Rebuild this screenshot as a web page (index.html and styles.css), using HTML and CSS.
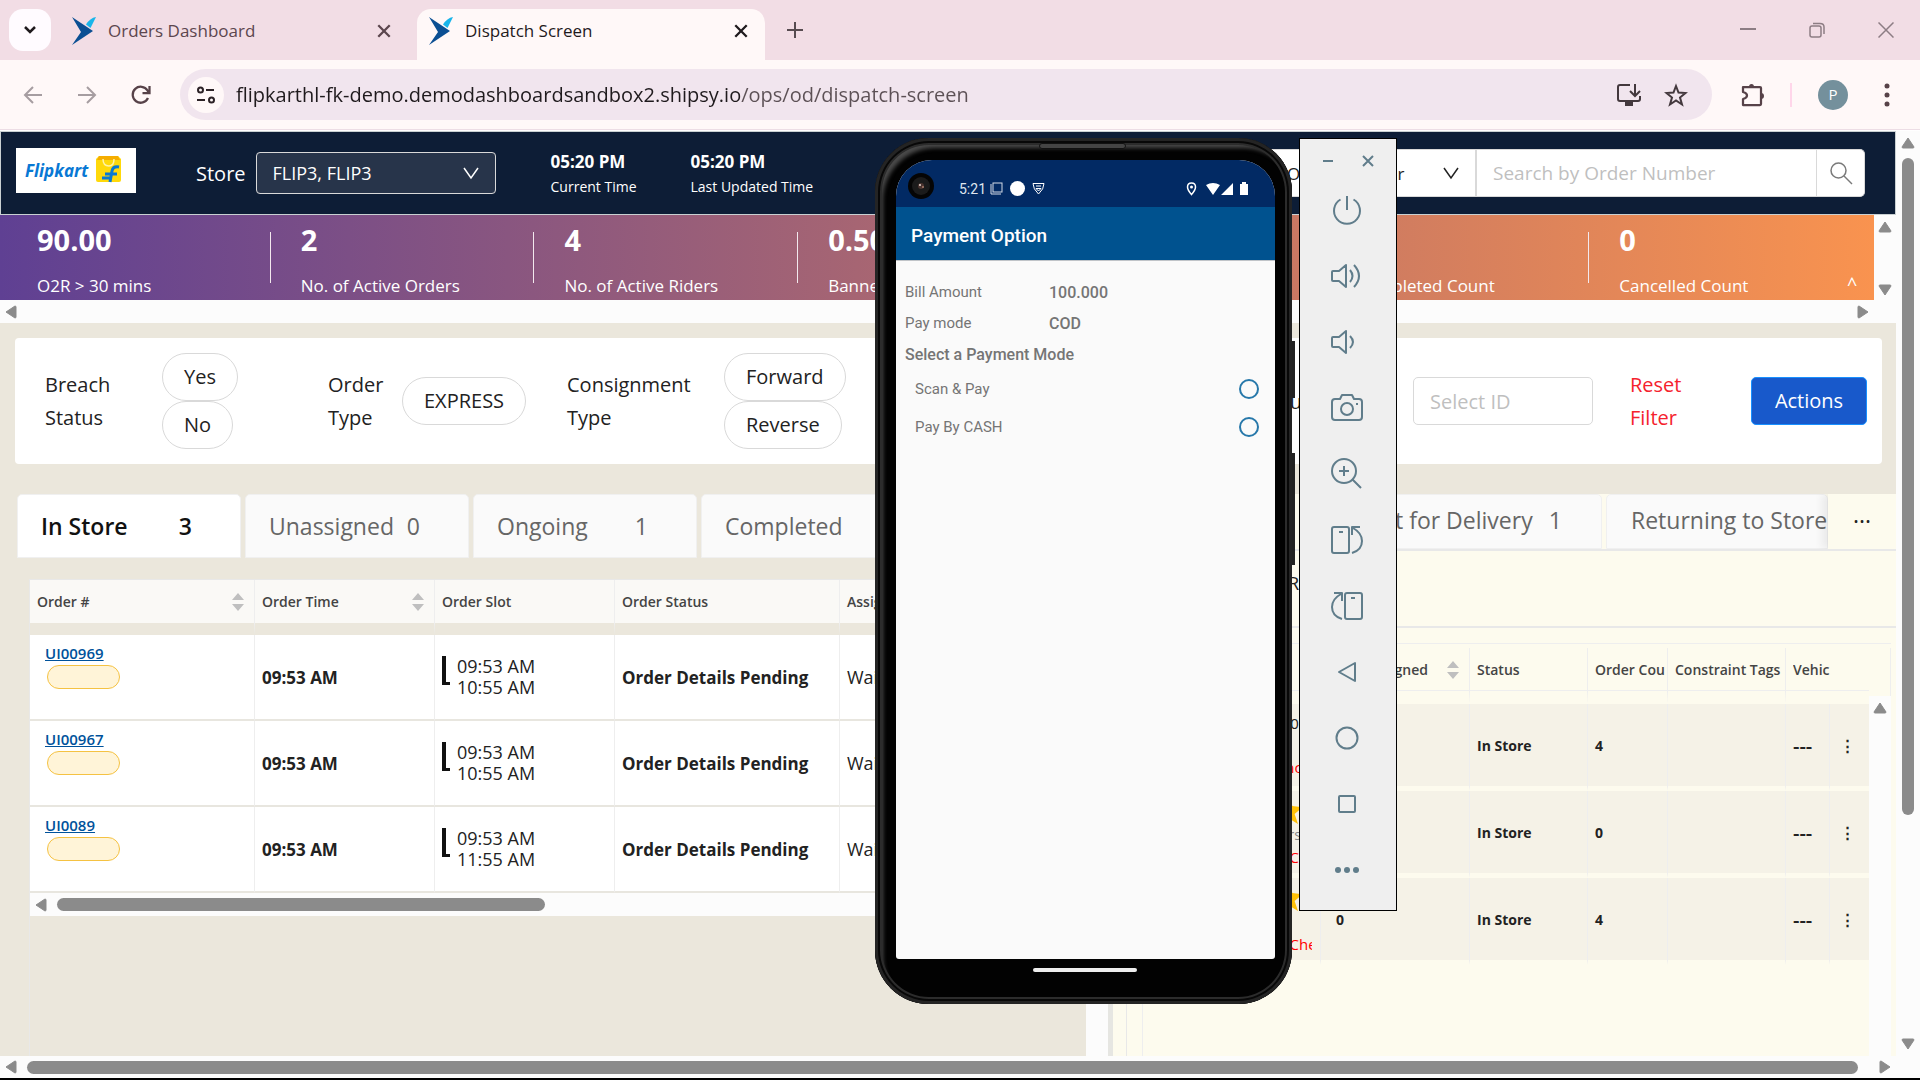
FILE: index.html
```html
<!DOCTYPE html>
<html lang="en">
    <head>
        <meta charset="UTF-8">
        <title>Dispatch Screen</title>
        <link rel="stylesheet" href="styles.css">
    </head>
    <body>
        <svg class="sprite" aria-hidden="true">
            <symbol id="logo" viewBox="0 0 24 28">
                <path d="M0 0 L21 14 L0 28 L9 15 Z" fill="#0b4f93"/>
                <path d="M14 7.500 Q18 1 24 0 L18.500 11 Z" fill="#19b5ea"/>
            </symbol>
            <symbol id="close" viewBox="0 0 14 14">
                <path d="M2 2 L12 12 M12 2 L2 12" fill="none" stroke="currentColor" stroke-width="2"/>
            </symbol>
            <symbol id="chevron" viewBox="0 0 16 16">
                <path d="M1 3 L8 13 L15 3" fill="none" stroke="currentColor" stroke-width="1.500"/>
            </symbol>
            <symbol id="triangle" viewBox="0 0 14 12">
                <path d="M7 1 L13 10 Q13 11 12 11 H2 Q1 11 1 10 Z" fill="#8b8b8b" stroke="#8b8b8b" stroke-linejoin="round"/>
            </symbol>
            <symbol id="sort" viewBox="0 0 12 18">
                <path d="M6 0 L12 7 H0 Z M6 18 L12 11 H0 Z" fill="#bfbfbf"/>
            </symbol>
            <symbol id="star" viewBox="0 0 24 24">
                <path d="M12 0 L15 8 L24 9 L17 15 L20 24 L12 19 L4 24 L7 15 L0 9 L9 8 Z" fill="#ffc107"/>
            </symbol>
        </svg>

        <div class="tab-strip">
            <button class="tab-search" aria-label="Search tabs">
                <svg width="14" height="14" viewBox="0 0 14 14"><path d="M2 4 L7 9 L12 4" fill="none" stroke="#1f1a1d" stroke-width="2.500"/></svg>
            </button>
            <div class="browser-tab">
                <svg class="favicon"><use href="#logo"/></svg>
                <span>Orders Dashboard</span>
                <button aria-label="Close tab"><svg width="16" height="16"><use href="#close"/></svg></button>
            </div>
            <div class="browser-tab is-active">
                <svg class="favicon"><use href="#logo"/></svg>
                <span>Dispatch Screen</span>
                <button aria-label="Close tab"><svg width="16" height="16"><use href="#close"/></svg></button>
            </div>
            <button class="new-tab" aria-label="New tab">
                <svg width="16" height="16" viewBox="0 0 16 16"><path d="M8 0 V16 M0 8 H16" stroke="#574b50" stroke-width="2"/></svg>
            </button>
            <div class="window-buttons">
                <button aria-label="Minimize"><svg width="16" height="16" viewBox="0 0 16 16"><path d="M0 7 H16" stroke="#8d7d84" stroke-width="2"/></svg></button>
                <button aria-label="Restore"><svg width="16" height="16" viewBox="0 0 16 16" fill="none" stroke="#8d7d84" stroke-width="1.500"><rect x="1" y="4" width="11" height="11" rx="2"/><path d="M4 1.500 H11 Q15 1.500 15 5 V12"/></svg></button>
                <button aria-label="Close"><svg width="16" height="16" viewBox="0 0 16 16"><path d="M0.500 0.500 L15.500 15.500 M15.500 0.500 L0.500 15.500" stroke="#8d7d84" stroke-width="1.500"/></svg></button>
            </div>
        </div>

        <div class="browser-toolbar">
            <div class="nav-buttons">
                <button aria-label="Back"><svg width="20" height="20" viewBox="0 0 20 20" fill="none" stroke="#a69da1" stroke-width="2"><path d="M19 10 H2 M10 2 L2 10 L10 18"/></svg></button>
                <button aria-label="Forward"><svg width="20" height="20" viewBox="0 0 20 20" fill="none" stroke="#a69da1" stroke-width="2"><path d="M1 10 H18 M10 2 L18 10 L10 18"/></svg></button>
                <button aria-label="Reload"><svg width="20" height="20" viewBox="0 0 20 20" fill="none" stroke="#574249" stroke-width="2.250"><path d="M17 13 A8 8 0 1 1 16.500 5.500 L18 7.500 M18.500 1 V8 H11.500"/></svg></button>
            </div>
            <div class="address-bar">
                <button class="site-info" aria-label="Site information">
                    <svg width="20" height="20" viewBox="0 0 20 20" fill="none" stroke="#2c2226" stroke-width="2"><circle cx="4.500" cy="5" r="2.500"/><path d="M10 5 H18 M1 15 H9"/><circle cx="15.500" cy="15" r="2.500"/></svg>
                </button>
                <input type="text" aria-label="Address" value="flipkarthl-fk-demo.demodashboardsandbox2.shipsy.io/ops/od/dispatch-screen">
                <button aria-label="Install app"><svg width="26" height="24" viewBox="0 0 26 24" fill="none" stroke="#43383d" stroke-width="2"><path d="M14 2 H4 Q2 2 2 4 V16 Q2 18 4 18 H22 Q24 18 24 16 V13"/><path d="M19 1 V12 M14 8 L19 13 L24 8"/><path d="M9 21 H17" stroke-width="4"/></svg></button>
                <button aria-label="Bookmark"><svg width="24" height="24" viewBox="0 0 24 24" fill="none" stroke="#43383d" stroke-width="2"><path d="M12 3 L14.500 9.500 L21.500 10 L16 14.500 L18 21.500 L12 17.500 L6 21.500 L8 14.500 L2.500 10 L9.500 9.500 Z"/></svg></button>
            </div>
            <button class="extensions" aria-label="Extensions">
                <svg width="26" height="26" viewBox="0 0 26 26" fill="none" stroke="#574249" stroke-width="2.250" stroke-linejoin="round"><path d="M3 5 H20 Q21 5 21 6 V22 Q21 23 20 23 H3 V17 Q7 16 7 13.500 Q7 11 3 10 Z"/><path d="M9 5 Q9 2 11.500 2 Q14 2 14 5 Z M21 11 Q24 11 24 14 Q24 17 21 17 Z" fill="#574249" stroke="none"/></svg>
            </button>
            <span class="toolbar-divider"></span>
            <button class="profile">P</button>
            <button class="browser-menu" aria-label="Menu">
                <svg width="6" height="26" viewBox="0 0 6 26" fill="#574249"><circle cx="3" cy="4" r="2.500"/><circle cx="3" cy="13" r="2.500"/><circle cx="3" cy="22" r="2.500"/></svg>
            </button>
        </div>

        <div class="viewport">
            <div class="page">
                <header class="page-header">
                    <svg class="brand" width="120" height="45" viewBox="0 0 120 45" role="img" aria-label="Flipkart">
                        <rect width="120" height="45" fill="#fff"/>
                        <text x="9" y="29" class="brand-text">Flipkart</text>
                        <path d="M80 11 L83 8 H102 L105 11 V32 Q105 34 103 34 H82 Q80 34 80 32 Z" fill="#ffd90a"/>
                        <path d="M83 8 H102 L104 12 H81 Z" fill="#f5ad00"/>
                        <path d="M87 11 Q87 18 93 18 Q98 18 98 11" fill="none" stroke="#fff3a8" stroke-width="1.500"/>
                        <path d="M103 19 Q97 18 96 23 L94 34 M89 26 H101 M86 30 H96" fill="none" stroke="#0878d4" stroke-width="3"/>
                    </svg>
                    <label class="store-label" for="store">Store</label>
                    <div class="select-box store-select">
                        <select id="store"><option>FLIP3, FLIP3</option></select>
                        <svg width="16" height="16"><use href="#chevron"/></svg>
                    </div>
                    <div class="clock"><strong>05:20 PM</strong><span>Current Time</span></div>
                    <div class="clock"><strong>05:20 PM</strong><span>Last Updated Time</span></div>
                    <form class="order-search">
                        <div class="select-box type-select">
                            <select aria-label="Search type"><option>Order Number</option></select>
                            <svg width="16" height="16"><use href="#chevron"/></svg>
                        </div>
                        <input type="text" aria-label="Order number" placeholder="Search by Order Number">
                        <button type="button" aria-label="Search"><svg width="24" height="24" viewBox="0 0 24 24" fill="none" stroke="#7a7a7a" stroke-width="1.500"><circle cx="9.500" cy="9.500" r="7.500"/><path d="M15 15 L23 23"/></svg></button>
                    </form>
                </header>

                <div class="metrics-row">
                    <div class="metrics">
                        <div class="metric"><strong>90.00</strong><span>O2R &gt; 30 mins</span></div>
                        <div class="metric"><strong>2</strong><span>No. of Active Orders</span></div>
                        <div class="metric"><strong>4</strong><span>No. of Active Riders</span></div>
                        <div class="metric"><strong>0.50</strong><span>Banner Ratio</span></div>
                        <div class="metric"><strong>0</strong><span>Ongoing Count</span></div>
                        <div class="metric"><strong>0</strong><span>Completed Count</span></div>
                        <div class="metric"><strong>0</strong><span>Cancelled Count</span></div>
                        <button class="collapse">^</button>
                    </div>
                    <div class="scroll-y">
                        <svg class="arrow"><use href="#triangle"/></svg>
                        <svg class="arrow is-down"><use href="#triangle"/></svg>
                    </div>
                </div>
                <div class="scroll-x metrics-scroll">
                    <svg class="arrow is-left"><use href="#triangle"/></svg>
                    <svg class="arrow is-right"><use href="#triangle"/></svg>
                </div>

                <div class="filters">
                    <span>Breach<br>Status</span>
                    <div class="pills"><button>Yes</button><button>No</button></div>
                    <span>Order<br>Type</span>
                    <div class="pills"><button>EXPRESS</button></div>
                    <span>Consignment<br>Type</span>
                    <div class="pills"><button>Forward</button><button>Reverse</button></div>
                    <label for="hub">Hub</label>
                    <input type="text" id="hub" placeholder="Select ID">
                    <a href="#">Reset<br>Filter</a>
                    <button class="actions">Actions</button>
                </div>

                <div class="boards">
                    <section class="orders">
                        <div class="orders-main">
                            <div class="tabs">
                                <button class="is-active"><span>In Store</span><b>3</b></button>
                                <button><span>Unassigned</span><b>0</b></button>
                                <button><span>Ongoing</span><b>1</b></button>
                                <button class="is-wide"><span>Completed</span><b>0</b></button>
                            </div>
                            <div class="orders-table-box">
                                <table class="orders-table">
                                    <colgroup><col class="w225"><col class="w180"><col class="w180"><col class="w225"><col></colgroup>
                                    <thead>
                                        <tr>
                                            <th>Order # <svg class="sort"><use href="#sort"/></svg></th>
                                            <th>Order Time <svg class="sort"><use href="#sort"/></svg></th>
                                            <th>Order Slot</th>
                                            <th>Order Status</th>
                                            <th>Assigned Rider</th>
                                        </tr>
                                    </thead>
                                    <tbody>
                                        <tr>
                                            <td class="order-id"><a href="#">UI00969</a><span></span></td>
                                            <td><b>09:53 AM</b></td>
                                            <td><div class="slot"><i></i><span>09:53 AM<br>10:55 AM</span></div></td>
                                            <td><b>Order Details Pending</b></td>
                                            <td>Waiting</td>
                                        </tr>
                                        <tr>
                                            <td class="order-id"><a href="#">UI00967</a><span></span></td>
                                            <td><b>09:53 AM</b></td>
                                            <td><div class="slot"><i></i><span>09:53 AM<br>10:55 AM</span></div></td>
                                            <td><b>Order Details Pending</b></td>
                                            <td>Waiting</td>
                                        </tr>
                                        <tr>
                                            <td class="order-id"><a href="#">UI0089</a><span></span></td>
                                            <td><b>09:53 AM</b></td>
                                            <td><div class="slot"><i></i><span>09:53 AM<br>11:55 AM</span></div></td>
                                            <td><b>Order Details Pending</b></td>
                                            <td>Waiting</td>
                                        </tr>
                                    </tbody>
                                </table>
                                <div class="scroll-x">
                                    <svg class="arrow is-left"><use href="#triangle"/></svg>
                                    <div class="thumb orders-thumb"></div>
                                    <svg class="arrow is-right"><use href="#triangle"/></svg>
                                </div>
                            </div>
                        </div>
                        <div class="scroll-y"></div>
                    </section>

                    <section class="riders">
                        <div class="tabs rider-tabs">
                            <button><span>Out for Delivery</span><b>1</b></button>
                            <button><span>Returning to Store</span></button>
                            <button class="more">···</button>
                        </div>
                        <div class="rider-bar">Riders</div>
                        <div class="riders-table-box">
                            <div class="riders-table-wrap">
                                <table class="riders-table">
                                    <colgroup><col><col class="w149"><col class="w118"><col class="w80"><col class="w118"><col class="w44"><col class="w39"></colgroup>
                                    <thead>
                                        <tr>
                                            <th>Rider</th>
                                            <th>Last Assigned <svg class="sort"><use href="#sort"/></svg></th>
                                            <th>Status</th>
                                            <th><span class="clip is-count">Order Count</span></th>
                                            <th>Constraint Tags</th>
                                            <th colspan="2"><span class="clip">Vehicle</span></th>
                                        </tr>
                                    </thead>
                                    <tbody>
                                        <tr>
                                            <td><div class="rider"><span class="rider-name">R 100</span><small>(10)</small><em>Launched</em></div></td>
                                            <td>0</td><td>In Store</td><td>4</td><td></td><td class="vehicle">---</td>
                                            <td><button aria-label="Row menu">⋮</button></td>
                                        </tr>
                                        <tr>
                                            <td><div class="rider"><svg><use href="#star"/></svg><small>Riders</small><em>Not Checked In</em></div></td>
                                            <td>0</td><td>In Store</td><td>0</td><td></td><td class="vehicle">---</td>
                                            <td><button aria-label="Row menu">⋮</button></td>
                                        </tr>
                                        <tr>
                                            <td><div class="rider"><svg><use href="#star"/></svg><small>&nbsp;</small><em>Not Checked In</em></div></td>
                                            <td>0</td><td>In Store</td><td>4</td><td></td><td class="vehicle">---</td>
                                            <td><button aria-label="Row menu">⋮</button></td>
                                        </tr>
                                    </tbody>
                                </table>
                            </div>
                            <div class="riders-scroll">
                                <div class="scroll-y"><svg class="arrow"><use href="#triangle"/></svg></div>
                            </div>
                        </div>
                    </section>
                </div>
            </div>
            <div class="scroll-y page-scroll">
                <svg class="arrow"><use href="#triangle"/></svg>
                <div class="thumb"></div>
                <svg class="arrow is-down"><use href="#triangle"/></svg>
            </div>
        </div>
        <div class="scroll-x window-scroll">
            <svg class="arrow is-left"><use href="#triangle"/></svg>
            <div class="thumb"></div>
            <svg class="arrow is-right"><use href="#triangle"/></svg>
        </div>

        <!-- emulator windows floating over the dashboard -->
        <div class="phone">
            <i class="speaker"></i>
            <i class="side-button"></i>
            <i class="side-button is-long"></i>
            <div class="phone-screen">
                <div class="status-bar">
                    <svg class="camera" width="26" height="26" viewBox="0 0 26 26"><circle cx="13" cy="13" r="13" fill="#050505"/><circle cx="13" cy="13" r="9" fill="#1b1b1b"/><circle cx="13" cy="13" r="3" fill="#4a3430"/><circle cx="12" cy="12" r="1" fill="#e8d8d0"/><circle cx="15" cy="14" r="1" fill="#a77a68"/></svg>
                    <span>5:21</span>
                    <svg width="13" height="13" viewBox="0 0 13 13" fill="none" stroke="#d5dbe6"><rect x="3" y="1" width="9" height="9"/><path d="M1 2 V12 H11"/></svg>
                    <svg width="15" height="15" viewBox="0 0 15 15"><circle cx="7.500" cy="7.500" r="7.500" fill="#fff"/></svg>
                    <svg width="13" height="13" viewBox="0 0 13 13" fill="none" stroke="#fff"><path d="M1 1.500 H12 Q12 7 6.500 12 Q1 7 1 1.500 Z M4 4 H9 M4 6.500 H9 L6.500 9 Z"/></svg>
                    <svg class="status-right" width="64" height="14" viewBox="0 0 64 14" fill="#fff"><path d="M5.500 1 Q9.500 1 9.500 5 Q9.500 8 5.500 12.500 Q1.500 8 1.500 5 Q1.500 1 5.500 1 Z" fill="none" stroke="#fff" stroke-width="1.500"/><circle cx="5.500" cy="5" r="1.500"/><path d="M20 3 Q27 -1 34 3 L27 13 Z M47 1 V13 H35 Z"/><path d="M54 2 H56 V0 H60 V2 H62 V13 H54 Z"/></svg>
                </div>
                <div class="app-bar">Payment Option</div>
                <form class="payment">
                    <dl>
                        <dt>Bill Amount</dt><dd>100.000</dd>
                        <dt>Pay mode</dt><dd>COD</dd>
                    </dl>
                    <h4>Select a Payment Mode</h4>
                    <label>Scan &amp; Pay <input type="radio" name="pay-mode"></label>
                    <label>Pay By CASH <input type="radio" name="pay-mode"></label>
                </form>
            </div>
            <i class="home-bar"></i>
        </div>

        <div class="emulator-bar">
            <div class="emulator-title">
                <button aria-label="Minimize emulator"><svg width="12" height="12" viewBox="0 0 12 12"><path d="M1 6 H11"/></svg></button>
                <button aria-label="Close emulator"><svg width="12" height="12" viewBox="0 0 12 12"><path d="M1 1 L11 11 M11 1 L1 11"/></svg></button>
            </div>
            <button aria-label="Power"><svg viewBox="0 0 32 32"><path d="M9.500 5.500 A13 13 0 1 0 22.500 5.500 M16 2 V16"/></svg></button>
            <button aria-label="Volume up"><svg viewBox="0 0 32 32"><path d="M1 12 Q1 11 2 11 H8 L15 5 V27 L8 21 H2 Q1 21 1 20 Z M19 10 Q24 16 19 22 M23 5 Q33 16 23 27"/></svg></button>
            <button aria-label="Volume down"><svg viewBox="0 0 32 32"><path d="M1 12 Q1 11 2 11 H8 L15 5 V27 L8 21 H2 Q1 21 1 20 Z M19 10 Q25 16 19 22"/></svg></button>
            <button aria-label="Screenshot"><svg viewBox="0 0 32 32"><path d="M4 7 H9 L11 3 H21 L23 7 H28 Q31 7 31 10 V25 Q31 28 28 28 H4 Q1 28 1 25 V10 Q1 7 4 7 Z"/><circle cx="16" cy="17" r="6"/><path d="M26 11 V13"/></svg></button>
            <button aria-label="Zoom"><svg viewBox="0 0 32 32"><circle cx="13" cy="13" r="12"/><path d="M21.500 21.500 L30 30 M13 8 V18 M8 13 H18"/></svg></button>
            <button aria-label="Rotate left"><svg viewBox="0 0 32 32"><rect x="1" y="3" width="17" height="26" rx="2"/><path d="M8 8 H12 M29 3 H21 V11 M22 4 Q31 9 31 17 Q31 26 21 29"/></svg></button>
            <button aria-label="Rotate right"><svg viewBox="0 0 32 32"><rect x="14" y="3" width="17" height="26" rx="2"/><path d="M20 8 H24 M3 3 H11 V11 M10 4 Q1 9 1 17 Q1 26 11 29"/></svg></button>
            <button aria-label="Back"><svg viewBox="0 0 32 32"><path d="M8 16 L24 7 V25 Z"/></svg></button>
            <button aria-label="Home"><svg viewBox="0 0 32 32"><circle cx="16" cy="16" r="10.500"/></svg></button>
            <button aria-label="Overview"><svg viewBox="0 0 32 32"><rect x="8" y="8" width="16" height="16" rx="1"/></svg></button>
            <button aria-label="More"><svg viewBox="0 0 32 32"><g class="dots"><circle cx="7" cy="16" r="3"/><circle cx="16" cy="16" r="3"/><circle cx="25" cy="16" r="3"/></g></svg></button>
        </div>
    </body>
</html>
```
FILE: styles.css
```css
* {
    box-sizing: border-box;
    padding: 0;
    margin: 0;
}

html, body {
    height: 100%;
}

body {
    display: flex;
    flex-direction: column;
    position: relative;
    overflow: hidden;
    border-bottom: 2px solid #000;
    font-family: "Open Sans", "Noto Sans", sans-serif;
    font-size: 18px;
    color: #222;
}

button {
    border: none;
    background: none;
    color: inherit;
    font: inherit;
    line-height: 1;
}

input, select {
    font: inherit;
    outline: none;
}

svg {
    display: block;
    flex: none;
}

.sprite {
    position: absolute;
    width: 0;
    height: 0;
}

/* browser window */

.tab-strip {
    display: flex;
    align-items: flex-start;
    flex: none;
    height: 60px;
    padding: 9px 8px 0 9px;
    background-color: #f2dde5;
}

.tab-search {
    display: grid;
    place-items: center;
    width: 42px;
    height: 42px;
    border-radius: 14px;
    background-color: #fffbff;
}

.browser-tab {
    display: flex;
    align-items: center;
    gap: 12px;
    width: 348px;
    height: 51px;
    margin-left: 9px;
    padding: 0 16px 8px 12px;
    font-size: 17px;
    color: #5c464e;
}

.browser-tab .favicon {
    width: 24px;
    height: 28px;
}

.browser-tab button {
    margin-left: auto;
}

.browser-tab.is-active {
    border-radius: 14px 14px 0 0;
    background-color: #fff8f8;
    color: #1f1a1d;
}

.new-tab {
    margin: 13px 0 0 22px;
}

.window-buttons {
    display: flex;
    gap: 53px;
    margin: 13px 18px 0 auto;
}

.browser-toolbar {
    display: flex;
    align-items: center;
    flex: none;
    height: 70px;
    padding: 0 30px 0 23px;
    background-color: #fff8f8;
    border-bottom: 1px solid #eddde5;
}

.nav-buttons {
    display: flex;
    gap: 34px;
    margin-right: 29px;
}

.address-bar {
    display: flex;
    align-items: center;
    flex: 1;
    gap: 22px;
    height: 51px;
    padding: 0 24px 0 8px;
    border-radius: 26px;
    background-color: #f1e5ee;
}

.address-bar .site-info {
    display: grid;
    place-items: center;
    width: 36px;
    height: 36px;
    border-radius: 18px;
    background-color: #fff8f8;
}

.address-bar input {
    flex: 1;
    margin-left: -10px;
    border: none;
    font-size: 20px;
    background: linear-gradient(to right, #1f1a1d 504px, #5c5055 504px);
    background-clip: text;
    -webkit-text-fill-color: transparent;
}

.extensions {
    margin-left: 28px;
}

.toolbar-divider {
    width: 2px;
    height: 24px;
    margin: 0 26px 0 24px;
    background-color: #ffd6ea;
}

.profile {
    width: 30px;
    height: 30px;
    border-radius: 15px;
    background-color: #74909c;
    color: #fff;
    font-size: 15px;
}

.browser-menu {
    margin-left: 36px;
}

/* scrollbars */

.scroll-x,
.scroll-y {
    display: flex;
    align-items: center;
    justify-content: space-between;
    flex: none;
    background-color: #fcfcfc;
}

.scroll-x {
    height: 23px;
    padding: 0 4px;
}

.scroll-y {
    flex-direction: column;
    width: 22px;
    padding: 6px 0;
}

.arrow {
    width: 14px;
    height: 12px;
}

.arrow.is-down {
    transform: rotate(180deg);
}

.arrow.is-left {
    transform: rotate(-90deg);
}

.arrow.is-right {
    transform: rotate(90deg);
}

.thumb {
    border-radius: 7px;
    background-color: #8b8b8b;
}

.scroll-x .thumb {
    height: 13px;
    margin: 0 auto 0 9px;
}

.scroll-x .orders-thumb {
    width: 488px;
}

.window-scroll {
    padding: 0 28px 0 4px;
    height: 22px;
}

.window-scroll .thumb {
    flex: 1;
    margin: 0 20px 0 9px;
}

.page-scroll {
    width: 24px;
}

.page-scroll .thumb {
    width: 12px;
    height: 72%;
    margin: 9px 0 auto;
}

/* dashboard */

.viewport {
    display: flex;
    flex: 1;
    min-height: 0;
    margin-top: 1px;
}

.page {
    display: flex;
    flex-direction: column;
    flex: 1;
    min-width: 0;
    background-color: #ebe7dc;
}

.page-header {
    display: flex;
    align-items: center;
    flex: none;
    height: 84px;
    padding: 0 30px 0 15px;
    border: 1px solid #c9d0d2;
    background-color: #0d1d36;
    color: #fff;
}

.brand {
    margin-bottom: 6px;
}

.brand-text {
    font-size: 17px;
    font-weight: 700;
    font-style: italic;
    fill: #0878d4;
}

.store-label {
    margin: 0 10px 0 60px;
    font-size: 20px;
}

.select-box {
    display: grid;
    align-items: center;
}

.select-box select,
.select-box svg {
    grid-area: 1 / 1;
}

.select-box select {
    width: 100%;
    height: 100%;
    padding: 0 16px;
    border: 1px solid #d9d9d9;
    appearance: none;
    background: none;
    color: inherit;
}

.select-box svg {
    justify-self: end;
    margin-right: 17px;
    pointer-events: none;
}

.store-select {
    width: 240px;
    height: 42px;
    border-radius: 4px;
    background-color: #27344a;
    font-size: 18px;
}

.store-select select {
    border-radius: 4px;
}

.clock {
    display: flex;
    flex-direction: column;
    gap: 2px;
    width: 140px;
    padding-top: 2px;
    font-size: 14px;
    line-height: 23px;
    white-space: nowrap;
}

.clock strong {
    font-size: 17px;
}

.store-select + .clock {
    margin-left: 55px;
}

.order-search {
    display: flex;
    height: 48px;
    margin-left: auto;
    color: #222;
}

.type-select {
    width: 206px;
    background-color: #fff;
    font-size: 17px;
}

.order-search input {
    width: 341px;
    padding: 0 16px;
    border: 1px solid #d9d9d9;
    font-size: 19px;
}

.order-search button {
    display: grid;
    place-items: center;
    width: 48px;
    border: 1px solid #d9d9d9;
    border-left: none;
    border-radius: 0 5px 5px 0;
    background-color: #fff;
}

input::placeholder {
    color: #bfbfbf;
}

.metrics-row {
    display: flex;
    flex: none;
    height: 85px;
}

.metrics-row .scroll-y {
    padding: 6px 0 4px;
}

.metrics {
    display: flex;
    align-items: center;
    flex: 1;
    padding-left: 7px;
    background: linear-gradient(to right, #5f4093, #a86672 47%, #d07c60 74%, #f9934f);
    color: #fff;
}

.metric {
    display: flex;
    flex-direction: column;
    justify-content: space-between;
    flex: 1;
    height: 51px;
    padding-left: 30px;
    border-right: 1px solid #f3e9ee;
    white-space: nowrap;
}

.metric:nth-child(7) {
    border: none;
}

.metric strong {
    margin-top: -10px;
    font-size: 29px;
    line-height: 36px;
}

.metric span {
    margin-bottom: -15px;
    font-size: 17px;
    line-height: 24px;
}

.collapse {
    align-self: flex-end;
    width: 22px;
    margin: 0 11px 7px -11px;
}

.metrics-scroll {
    padding-right: 26px;
}

.filters {
    display: grid;
    grid-template-columns: 117px 166px 74px 165px 157px 1fr 138px 217px 121px 116px;
    align-items: center;
    flex: none;
    height: 126px;
    margin: 15px 14px 30px 15px;
    padding: 0 15px 0 30px;
    border-radius: 4px;
    background-color: #fff;
    font-size: 20px;
    line-height: 33px;
}

.filters a {
    color: #f5222d;
    text-decoration: none;
}

.filters input {
    width: 180px;
    height: 48px;
    padding: 0 16px;
    border: 1px solid #d9d9d9;
    border-radius: 5px;
}

.pills {
    display: flex;
    flex-direction: column;
    align-items: flex-start;
}

.pills button {
    height: 48px;
    padding: 0 21px;
    border: 1px solid #d9d9d9;
    border-radius: 24px;
}

.actions {
    height: 48px;
    border: 1px solid #1890ff;
    border-radius: 5px;
    background-color: #1859cb;
    color: #fff;
}

.boards {
    display: flex;
    flex: 1;
    min-height: 0;
}

.orders {
    display: flex;
    width: 1113px;
    border-right: 5px solid #e6e6e2;
}

.orders-main {
    display: flex;
    flex-direction: column;
    flex: 1;
    min-width: 0;
    overflow: hidden;
}

.tabs {
    display: flex;
    gap: 4px;
    flex: none;
    padding-left: 17px;
    overflow: hidden;
}

.tabs button {
    display: flex;
    align-items: center;
    justify-content: space-between;
    flex: none;
    width: 224px;
    height: 64px;
    padding: 0 48px 0 23px;
    border: 1px solid #f0f0f0;
    border-radius: 5px 5px 0 0;
    background-color: #fafafa;
    color: #666;
    font-size: 23px;
}

.tabs b {
    font-weight: 400;
}

.tabs .is-active,
.tabs .is-active b {
    background-color: #fff;
    color: #111;
    font-weight: 600;
}

.tabs .is-wide {
    width: 248px;
}

.orders-table-box {
    flex: 1;
    margin: 21px 0 0 29px;
    border-top: 1px solid #e8e8e8;
    border-left: 1px solid #e8e8e8;
}

table {
    width: 100%;
    table-layout: fixed;
    border-collapse: separate;
    border-spacing: 0;
}

th, td {
    padding: 0 7px;
    overflow: hidden;
    text-align: left;
    white-space: nowrap;
    border-right: 1px solid #eee;
}

th {
    background-clip: padding-box;
    font-size: 14px;
    font-weight: 600;
    color: #444;
}

.sort {
    float: right;
    width: 12px;
    height: 18px;
    margin: 1px 3px 0 0;
}

.w225 { width: 225px; }
.w180 { width: 180px; }
.w149 { width: 149px; }
.w118 { width: 118px; }
.w80 { width: 80px; }
.w44 { width: 44px; }
.w39 { width: 39px; }

.orders-table th {
    height: 55px;
    border-bottom: 12px solid #ebe7dc;
    background-color: #faf9f6;
}

.orders-table td {
    height: 86px;
    border-bottom: 2px solid #e8e6df;
    background-color: #fff;
    font-size: 18px;
}

.orders-table td b {
    font-size: 17px;
}

.orders-table .order-id {
    padding: 8px 15px;
    vertical-align: top;
    font-size: 15px;
}

.order-id a {
    color: #00529b;
    font-weight: 600;
}

.order-id span {
    display: block;
    width: 73px;
    height: 24px;
    margin: 2px 2px 0;
    border: 1px solid #f5c242;
    border-radius: 12px;
    background-color: #fff4d8;
}

.slot {
    display: flex;
    gap: 7px;
    line-height: 21px;
}

.slot i {
    width: 8px;
    height: 29px;
    border-left: 4px solid #111;
    border-bottom: 3px solid #111;
}

.riders {
    display: flex;
    flex-direction: column;
    flex: 1;
    min-width: 0;
    background-color: #fdfbee;
}

.rider-tabs {
    justify-content: flex-end;
    border-bottom: 2px solid #e8e8e8;
}

.rider-tabs button {
    width: 222px;
    height: 55px;
    padding: 0 0 3px 24px;
    white-space: nowrap;
}

.rider-tabs button:first-child {
    width: 264px;
    padding-right: 39px;
}

.rider-tabs .more {
    justify-content: center;
    width: 68px;
    margin-left: -4px;
    padding: 0;
    border: none;
    border-radius: 0;
    background-color: #fdfbee;
    box-shadow: -6px 0 8px #0001;
    color: #222;
}

.rider-bar {
    flex: none;
    height: 77px;
    padding: 20px 0 0 175px;
    border-bottom: 2px solid #e8e8e8;
}

.riders-table-box {
    display: flex;
    flex: 1;
    min-height: 0;
    margin: 15px 5px 0 13px;
    padding: 4px 0 0 15px;
    border-top: 1px solid #eee;
    border-left: 1px solid #e8e8e8;
}

.riders-table-wrap {
    flex: 1;
    border-left: 1px solid #eee;
}

.riders-table th {
    height: 56px;
    border-bottom: 13px solid #fdfbee;
    box-shadow: inset 0 -1px #eee;
}

.riders-table td {
    height: 87px;
    border-bottom: 5px solid #fdfbee;
    background-color: #f5f2e7;
    background-clip: padding-box;
    font-size: 14px;
    font-weight: 700;
}

.riders-table th:nth-child(2),
.riders-table td:nth-child(2) {
    padding-left: 15px;
}

.riders-table td:first-child {
    padding: 0 8px 0 117px;
}

.riders-table th:last-child,
.riders-table td:last-child {
    border-right: none;
}

.riders-table .vehicle {
    font-size: 20px;
    font-weight: 600;
}

.riders-table td button {
    width: 20px;
    font-size: 15px;
    font-weight: 700;
}

.clip {
    display: block;
    width: 37px;
    overflow: hidden;
}

.clip.is-count {
    width: 70px;
}

.rider {
    display: flex;
    flex-direction: column;
    overflow: hidden;
    font-size: 15px;
    font-weight: 400;
    line-height: 22px;
}

.rider svg {
    width: 28px;
    height: 27px;
    margin-left: 15px;
}

.rider small {
    font-size: 14px;
    color: #888;
}

.rider em {
    font-style: normal;
    color: #f00;
}

.riders-scroll {
    display: flex;
    width: 22px;
    padding-top: 48px;
    border-right: 1px solid #eee;
}

/* phone emulator */

.phone {
    position: absolute;
    left: 875px;
    top: 138px;
    width: 417px;
    height: 866px;
    padding: 22px 17px 0 21px;
    border-radius: 54px;
    background-color: #020202;
    box-shadow: inset 0 0 0 3px #242424, inset 0 0 0 5px #080808, inset 0 0 0 7px #2c2c2c, inset 6px 8px 4px 2px #4a4a4a;
    font-family: Roboto, sans-serif;
}

.speaker {
    position: absolute;
    left: 164px;
    top: 5px;
    width: 87px;
    height: 6px;
    border-radius: 3px;
    background-color: #444;
    border: 1px solid #111;
}

.side-button {
    position: absolute;
    right: -3px;
    top: 203px;
    width: 3px;
    height: 57px;
    background-color: #222;
}

.side-button.is-long {
    top: 315px;
    height: 112px;
}

.phone-screen {
    height: 799px;
    overflow: hidden;
    border-radius: 36px 36px 3px 3px;
    background-color: #fafafa;
}

.status-bar {
    display: flex;
    align-items: center;
    gap: 7px;
    height: 47px;
    padding: 10px 25px 0 12px;
    background-color: #022a64;
    color: #dfe5ee;
    font-size: 14px;
}

.status-bar .camera {
    margin: -6px 18px 0 0;
}

.status-bar span {
    margin-right: -3px;
}

.status-bar .status-right {
    margin-left: auto;
}

.app-bar {
    height: 54px;
    padding-left: 15px;
    border-bottom: 1px solid #c0c4c8;
    background-color: #00528f;
    color: #fff;
    font-size: 19px;
    font-weight: 500;
    line-height: 57px;
}

.payment {
    padding: 16px 16px 0 9px;
    color: #757575;
    font-size: 15px;
    line-height: 31px;
}

.payment dl {
    display: grid;
    grid-template-columns: 144px 1fr;
}

.payment dd,
.payment h4 {
    font-size: 16px;
    font-weight: 500;
}

.payment label {
    display: flex;
    align-items: center;
    justify-content: space-between;
    height: 38px;
    padding-left: 10px;
}

.payment input {
    width: 20px;
    height: 20px;
    border: 2px solid #2778aa;
    border-radius: 10px;
    appearance: none;
}

.home-bar {
    position: absolute;
    left: 158px;
    bottom: 32px;
    width: 104px;
    height: 4px;
    border-radius: 2px;
    background-color: #eee;
}

.emulator-bar {
    position: absolute;
    left: 1299px;
    top: 138px;
    display: flex;
    flex-direction: column;
    width: 98px;
    height: 773px;
    border: 1px solid #000;
    background-color: #efefef;
}

.emulator-bar svg {
    width: 32px;
    height: 32px;
    fill: none;
    stroke: #607d8b;
    stroke-width: 2;
    stroke-linejoin: round;
}

.emulator-bar > button {
    display: grid;
    place-items: center;
    height: 66px;
    padding-right: 2px;
}

.emulator-bar .dots {
    fill: #607d8b;
    stroke: none;
}

.emulator-title {
    display: flex;
    align-items: center;
    gap: 28px;
    height: 38px;
    padding: 6px 0 0 22px;
}

.emulator-title svg {
    width: 12px;
    height: 12px;
}
```
